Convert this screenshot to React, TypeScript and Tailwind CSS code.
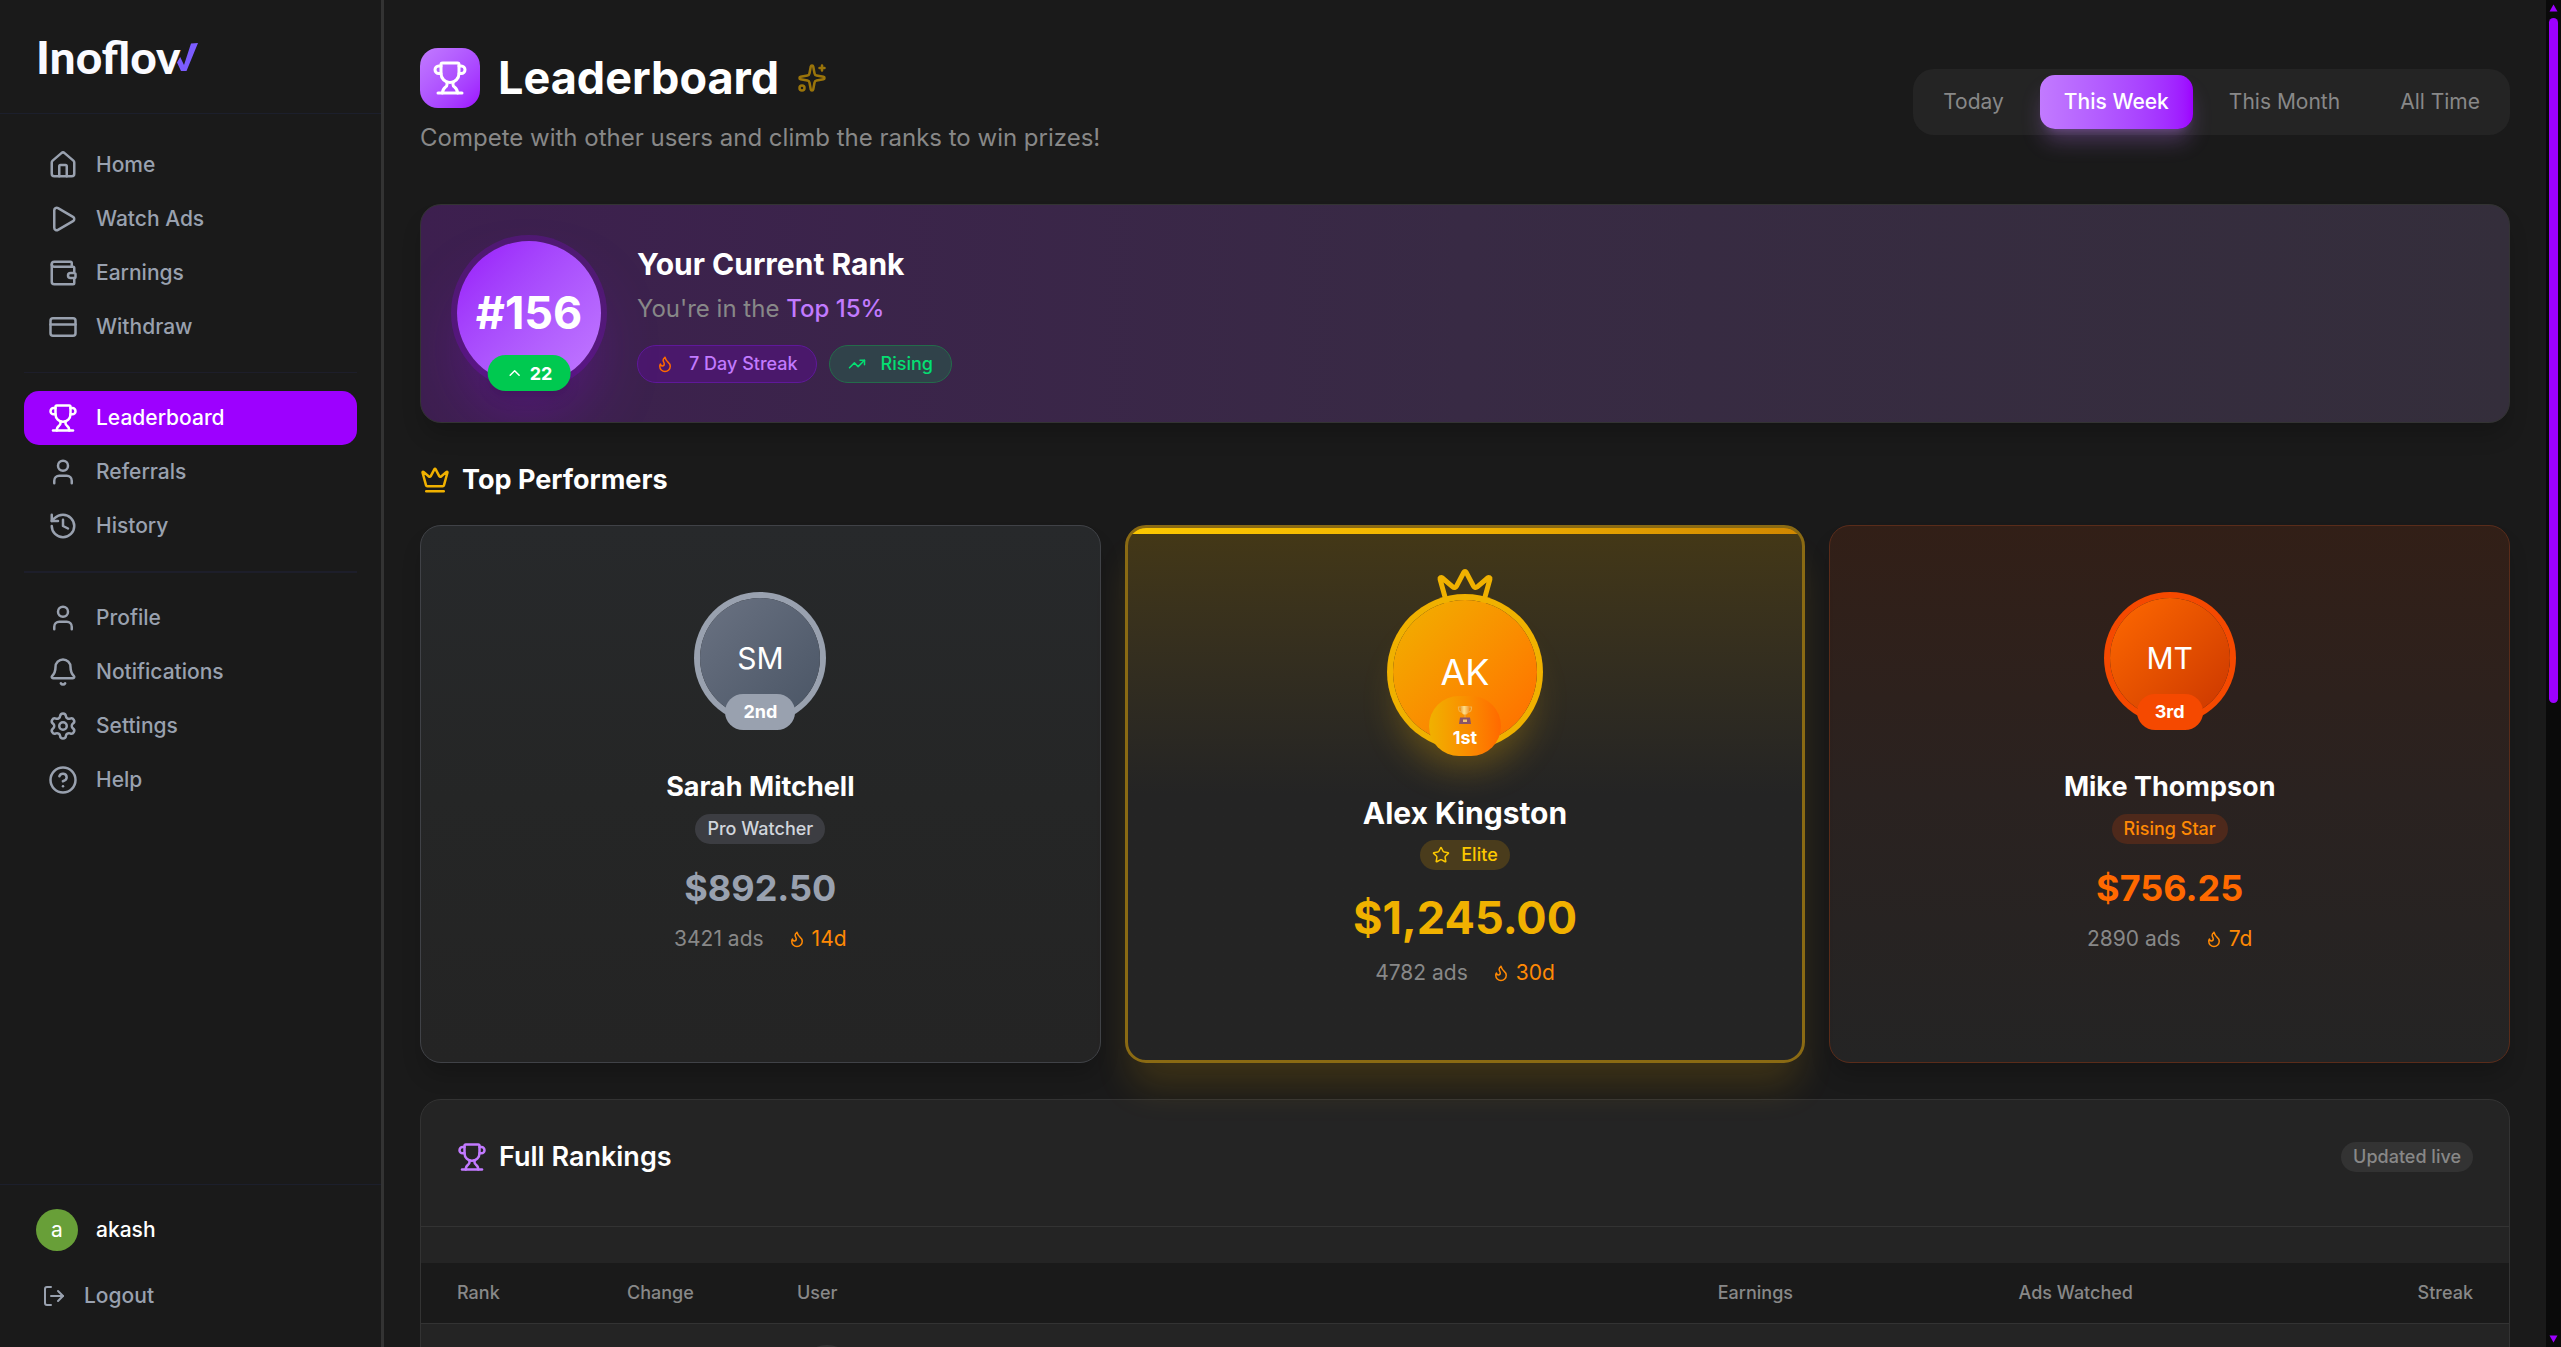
import type { ReactNode } from "react";
import {
  Bell,
  ChevronUp,
  CircleQuestionMark,
  CreditCard,
  Crown,
  Flame,
  History,
  House,
  LogOut,
  Play,
  Settings,
  Sparkles,
  Star,
  TrendingUp,
  Trophy,
  User,
  Wallet,
  type LucideIcon,
} from "lucide-react";
import clsx from "clsx";

interface NavItem {
  label: string;
  icon: LucideIcon;
  active?: boolean;
}

const navGroups: NavItem[][] = [
  [
    { label: "Home", icon: House },
    { label: "Watch Ads", icon: Play },
    { label: "Earnings", icon: Wallet },
    { label: "Withdraw", icon: CreditCard },
  ],
  [
    { label: "Leaderboard", icon: Trophy, active: true },
    { label: "Referrals", icon: User },
    { label: "History", icon: History },
  ],
  [
    { label: "Profile", icon: User },
    { label: "Notifications", icon: Bell },
    { label: "Settings", icon: Settings },
    { label: "Help", icon: CircleQuestionMark },
  ],
];

const periods = ["Today", "This Week", "This Month", "All Time"];

function Logo() {
  return (
    <a href="#" aria-label="Inoflow" className="flex h-[41px] items-center text-[#fafaff]">
      <span className="font-['Lato',sans-serif] text-[46px] font-black leading-[41px]">
        Inoflov
      </span>
      <svg viewBox="0 0 21 28" className="-ml-1 h-7 w-[21px]" aria-hidden="true">
        <path d="M14 .5 21 0 9.5 28H4L0 19.5 3.2 14 7 22z" fill="#7c5cff" />
      </svg>
    </a>
  );
}

function Sidebar() {
  return (
    <aside className="flex w-96 shrink-0 flex-col border-r-[3px] border-[#333]">
      <div className="border-b border-[#1c1f2c] p-9">
        <Logo />
      </div>

      <nav className="flex-1 p-6">
        {navGroups.map((group, i) => (
          <ul
            key={i}
            className={clsx(
              i > 0 && "mt-[18px] border-[#1d1e2a] pt-[18px]",
              i === 1 && "border-t",
              i === 2 && "border-t-2"
            )}
          >
            {group.map(({ label, icon: Icon, active }) => (
              <li key={label}>
                <a
                  href="#"
                  className={clsx(
                    "flex h-[54px] items-center gap-[18px] rounded-[15px] px-6 text-[21px] font-medium",
                    active ? "bg-[#9d00ff] text-white" : "text-[#99a1af]"
                  )}
                >
                  <Icon size={30} />
                  {label}
                </a>
              </li>
            ))}
          </ul>
        ))}
      </nav>

      <div className="border-t border-[#1c1f2c] p-6">
        <div className="mb-[18px] flex items-center gap-[18px] px-3">
          <span className="flex size-[42px] items-center justify-center rounded-full bg-[#689f38] text-[21px] text-white">
            a
          </span>
          <span className="text-[21px] font-medium text-white">akash</span>
        </div>
        <button className="flex h-[54px] w-full items-center gap-[18px] px-[18px] text-[21px] font-medium text-[#99a1af]">
          <LogOut size={24} />
          Logout
        </button>
      </div>
    </aside>
  );
}

function PageHeader() {
  return (
    <header className="flex items-center justify-between">
      <div>
        <div className="flex items-center gap-[18px]">
          <div className="flex size-[60px] items-center justify-center rounded-[18px] bg-linear-to-br from-[#c27aff] to-[#9d00ff] text-white">
            <Trophy size={36} />
          </div>
          <h1 className="text-[45px] font-bold leading-[54px] text-white">Leaderboard</h1>
          <Sparkles size={30} className="text-[#f0b100] opacity-60" />
        </div>
        <p className="mt-3 text-[24px] leading-9 text-[#888]">
          Compete with other users and climb the ranks to win prizes!
        </p>
      </div>

      <div className="flex gap-3 rounded-[21px] bg-[#242424] p-1.5">
        {periods.map((period) => (
          <button
            key={period}
            className={clsx(
              "h-[54px] rounded-[15px] px-6 text-[21px]",
              period === "This Week"
                ? "bg-linear-to-r from-[#c27aff] to-[#9d00ff] font-medium text-white shadow-[0_15px_22px_-4px_rgba(194,122,255,0.3),0_6px_9px_-6px_rgba(194,122,255,0.3)]"
                : "text-[#888]"
            )}
          >
            {period}
          </button>
        ))}
      </div>
    </header>
  );
}

function RankCard() {
  return (
    <section className="mt-12 flex items-center gap-9 overflow-hidden rounded-[21px] border border-[#333] bg-linear-to-r from-[#3d1f4f] via-[#382a44] to-[#342e3b] px-9 pb-[37px] pt-9 shadow-[0_15px_22px_-4px_rgba(0,0,0,0.2)]">
      <div className="relative">
        <div className="flex size-36 items-center justify-center rounded-full bg-linear-to-br from-[#9810fa] to-[#c27aff] text-[45px] font-bold text-white shadow-[0_0_0_6px_rgba(157,0,255,0.2),0_36px_75px_-18px_rgba(157,0,255,0.4)]">
          #156
        </div>
        <div className="absolute -bottom-1.5 left-1/2 flex h-9 -translate-x-1/2 items-center gap-1.5 rounded-full bg-[#00c950] px-[18px] text-[18px] font-bold text-white shadow-lg">
          <ChevronUp size={18} />
          22
        </div>
      </div>

      <div>
        <h2 className="text-[30px] font-bold leading-[42px] text-white">Your Current Rank</h2>
        <p className="mt-1.5 text-[24px] leading-9 text-[#888]">
          You're in the <span className="font-medium text-[#c27aff]">Top 15%</span>
        </p>
        <div className="mt-[18px] flex gap-3 text-[18px] font-medium leading-6">
          <span className="flex items-center gap-[15px] rounded-full border border-[#5f189a] bg-[#4a186b] px-[18px] py-1.5 text-[#c27aff]">
            <Flame size={18} className="text-[#ff6900]" />7 Day Streak
          </span>
          <span className="flex items-center gap-[15px] rounded-full border border-[#246b4b] bg-[#30424a] px-[18px] py-1.5 text-[#05df72]">
            <TrendingUp size={18} />
            Rising
          </span>
        </div>
      </div>
    </section>
  );
}

function CupEmoji() {
  return (
    <svg viewBox="0 0 16 20" className="h-5 w-4" aria-hidden="true">
      <defs>
        <linearGradient id="cup" x1="0" x2="1">
          <stop offset="0" stopColor="#e8a040" />
          <stop offset=".4" stopColor="#ffe08a" />
          <stop offset="1" stopColor="#f0932b" />
        </linearGradient>
      </defs>
      <path
        d="M4 2H1.5c-.3 3.500 1 5 3.500 5M12 2h2.500c.3 3.500-1 5-3.500 5"
        fill="none"
        stroke="#f2b24c"
        strokeWidth="1.200"
      />
      <path d="M3.500 1h9c.3 5-1 8-4.500 9C4.500 9 3.200 6 3.500 1z" fill="url(#cup)" />
      <path d="M7.200 9.500h1.600v3H7.200z" fill="#e8a040" />
      <path d="M3 12.500h10l1 6.500H2z" fill="#8a5468" />
      <path d="M6 14.500h4v2.500H6z" fill="#f2c572" />
    </svg>
  );
}

interface PerformerProps {
  initials: string;
  name: string;
  title: string;
  earnings: string;
  ads: number;
  streak: number;
  place: ReactNode;
  first?: boolean;
  cardClass: string;
  avatarClass: string;
  placeClass: string;
  titleClass: string;
  earningsClass: string;
}

const performers: PerformerProps[] = [
  {
    initials: "SM",
    name: "Sarah Mitchell",
    title: "Pro Watcher",
    earnings: "$892.50",
    ads: 3421,
    streak: 14,
    place: "2nd",
    cardClass:
      "border border-[#404247] bg-linear-to-b from-[#27292b] via-[#252626] to-[#242424] shadow-[0_15px_22px_-4px_rgba(0,0,0,0.2)]",
    avatarClass: "from-[#6a7282] to-[#4a5565] ring-[#99a1af]",
    placeClass: "h-9 bg-[#99a1af]",
    titleClass: "bg-[#3c3d42] text-[#d1d5dc]",
    earningsClass: "text-[#99a1af]",
  },
  {
    initials: "AK",
    name: "Alex Kingston",
    title: "Elite",
    earnings: "$1,245.00",
    ads: 4782,
    streak: 30,
    place: (
      <>
        <CupEmoji />
        1st
      </>
    ),
    first: true,
    cardClass:
      "z-10 border-[3px] border-[#8a6a13] bg-linear-to-b from-[#443816] to-[#242424] to-50% shadow-[0_30px_37px_-7px_rgba(240,177,0,0.16)]",
    avatarClass:
      "from-[#f0b100] to-[#ff6900] ring-[#f0b100] shadow-[0_30px_37px_-7px_rgba(240,177,0,0.3)]",
    placeClass: "h-[60px] w-[72px] gap-px pt-0.5 bg-linear-to-r from-[#f0b100] to-[#ff6900]",
    titleClass: "bg-[#4a3c1c] text-[#fcc800]",
    earningsClass: "text-[#f0b100]",
  },
  {
    initials: "MT",
    name: "Mike Thompson",
    title: "Rising Star",
    earnings: "$756.25",
    ads: 2890,
    streak: 7,
    place: "3rd",
    cardClass:
      "border border-[#5a2c1a] bg-linear-to-b from-[#321f17] via-[#2a2220] to-[#242424] shadow-[0_15px_22px_-4px_rgba(0,0,0,0.2)]",
    avatarClass: "from-[#ff6900] to-[#ca3500] ring-[#f54900]",
    placeClass: "h-9 bg-[#f54900]",
    titleClass: "bg-[#4e291b] text-[#ff8904]",
    earningsClass: "text-[#ff6900]",
  },
];

function PerformerCard({ performer: p }: { performer: PerformerProps }) {
  return (
    <article
      className={clsx(
        "relative flex min-h-[538px] flex-col items-center overflow-hidden rounded-[21px] pt-[72px]",
        p.cardClass
      )}
    >
      {p.first && (
        <div className="absolute inset-x-0 top-0 h-1.5 bg-linear-to-r from-[#fcc800] via-[#f0b100] to-[#d08700]" />
      )}

      <div className="relative">
        {p.first && (
          <Crown size={60} className="absolute -top-9 left-1/2 -translate-x-1/2 text-[#f0b100]" />
        )}
        <div
          className={clsx(
            "relative flex items-center justify-center rounded-full bg-linear-to-br text-white ring-[6px]",
            p.first ? "size-36 text-[36px]" : "size-[120px] text-[30px]",
            p.avatarClass
          )}
        >
          {p.initials}
        </div>
        <div
          className={clsx(
            "absolute -bottom-3 left-1/2 flex -translate-x-1/2 flex-col items-center justify-center rounded-full px-[18px] text-[18px] font-bold leading-6 text-white",
            p.placeClass
          )}
        >
          {p.place}
        </div>
      </div>

      <h3
        className={clsx(
          "mt-12 font-bold leading-[42px] text-white",
          p.first ? "text-[30px]" : "text-[27px]"
        )}
      >
        {p.name}
      </h3>
      <span
        className={clsx(
          "mt-1.5 flex h-[30px] items-center gap-[11px] rounded-full px-3 text-[18px] font-medium leading-6",
          p.titleClass
        )}
      >
        {p.first && <Star size={18} />}
        {p.title}
      </span>
      <p
        className={clsx(
          "mt-5 font-bold",
          p.first ? "text-[45px] leading-[56px]" : "text-[36px] leading-[48px]",
          p.earningsClass
        )}
      >
        {p.earnings}
      </p>
      <div className="mt-3 flex items-center gap-6 text-[21px] leading-[30px]">
        <span className="text-[#888]">{p.ads} ads</span>
        <span className="flex items-center gap-1.5 text-[#ff8904]">
          <Flame size={18} />
          {p.streak}d
        </span>
      </div>
    </article>
  );
}

function FullRankings() {
  return (
    <section className="mt-9 rounded-[21px] border border-[#333] bg-[#242424]">
      <div className="flex items-center justify-between border-b border-[#333] px-9 pb-12 pt-9">
        <h2 className="flex items-center gap-3 text-[27px] font-semibold leading-[42px] text-white">
          <Trophy size={30} className="text-[#c27aff]" />
          Full Rankings
        </h2>
        <span className="flex h-[30px] items-center rounded-full bg-[#333] px-3 text-[18px] font-medium leading-6 text-[#888]">
          Updated live
        </span>
      </div>

      <table className="mt-9 block text-[18px] leading-6 text-[#888]">
        <thead className="block border-b border-[#333] bg-[#1a1a1a]">
          <tr className="grid grid-cols-12 gap-6 px-9 py-[18px] text-left">
            <th className="font-medium">Rank</th>
            <th className="font-medium">Change</th>
            <th className="col-span-4 font-medium">User</th>
            <th className="col-span-2 text-right font-medium">Earnings</th>
            <th className="col-span-2 text-right font-medium">Ads Watched</th>
            <th className="col-span-2 text-right font-medium">Streak</th>
          </tr>
        </thead>
        <tbody className="block">
          <tr className="grid grid-cols-12 gap-6 px-9 py-[21px]">
            <td />
            <td />
            <td className="col-span-4">
              <span className="block size-[60px] rounded-full bg-[#333]" />
            </td>
          </tr>
        </tbody>
      </table>
    </section>
  );
}

function ScrollRail() {
  return (
    <div
      className="flex w-[15px] shrink-0 flex-col items-center bg-[#0a0a0a] py-1 text-[#9d00ff]"
      aria-hidden="true"
    >
      <svg viewBox="0 0 9 8" className="h-2 w-[9px]">
        <path d="M4.500 .5 8.500 7.500h-8z" fill="currentColor" />
      </svg>
      <div className="mt-1.5 flex-1">
        <div className="h-[52%] w-[9px] rounded-full bg-[#9d00ff]" />
      </div>
      <svg viewBox="0 0 9 8" className="h-2 w-[9px]">
        <path d="M4.500 7.500.5.5h8z" fill="currentColor" />
      </svg>
    </div>
  );
}

export default function App() {
  return (
    <div className="flex h-screen overflow-hidden bg-[#1a1a1a] font-['Inter',sans-serif]">
      <Sidebar />
      <main className="min-w-0 flex-1 overflow-hidden px-9 pt-12">
        <PageHeader />
        <RankCard />

        <h2 className="mb-6 mt-9 flex items-center gap-3 text-[27px] font-bold leading-[42px] text-white">
          <Crown size={30} className="text-[#f0b100]" />
          Top Performers
        </h2>
        <div className="grid grid-cols-3 gap-6">
          {performers.map((p) => (
            <PerformerCard key={p.name} performer={p} />
          ))}
        </div>

        <FullRankings />
      </main>
      <ScrollRail />
    </div>
  );
}
